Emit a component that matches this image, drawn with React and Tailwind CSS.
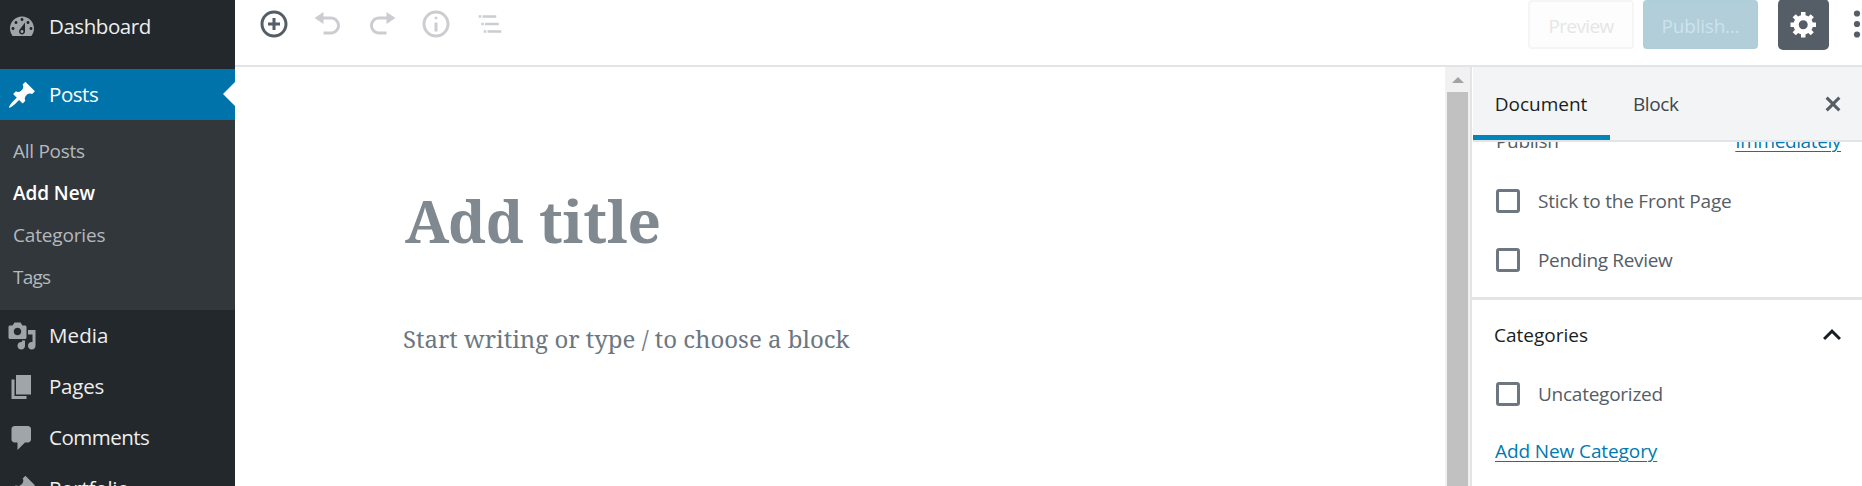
import React from 'react';

const paths = {
  dashboard: 'M3.76 16h12.48c1.1-1.37 1.76-3.11 1.76-5 0-4.42-3.58-8-8-8s-8 3.58-8 8c0 1.89.66 3.63 1.76 5zM10 4c.55 0 1 .45 1 1s-.45 1-1 1-1-.45-1-1 .45-1 1-1zM6 6c.55 0 1 .45 1 1s-.45 1-1 1-1-.45-1-1 .45-1 1-1zm8 0c.55 0 1 .45 1 1s-.45 1-1 1-1-.45-1-1 .45-1 1-1zm-5.37 5.55L12 7v6c0 1.1-.9 2-2 2s-2-.9-2-2c0-.57.24-1.08.63-1.45zM4 10c.55 0 1 .45 1 1s-.45 1-1 1-1-.45-1-1 .45-1 1-1zm12 0c.55 0 1 .45 1 1s-.45 1-1 1-1-.45-1-1 .45-1 1-1zm-5 3c0-.55-.45-1-1-1s-1 .45-1 1 .45 1 1 1 1-.45 1-1z',
  pin: 'M10.44 3.02l1.82-1.82 6.36 6.35-1.83 1.82c-1.05-.68-2.48-.57-3.41.36l-.75.75c-.92.93-1.04 2.35-.35 3.41l-1.83 1.82-2.41-2.41-2.8 2.79c-.42.42-3.38 2.71-3.8 2.29s1.86-3.39 2.28-3.81l2.79-2.79L4.1 9.36l1.83-1.82c1.05.69 2.48.57 3.4-.36l.75-.75c.93-.92 1.05-2.35.36-3.41z',
  media: 'M13 11V4c0-.55-.45-1-1-1h-1.67L9 1H5L3.67 3H2c-.55 0-1 .45-1 1v7c0 .55.45 1 1 1h10c.55 0 1-.45 1-1zM7 4.5c1.38 0 2.5 1.12 2.5 2.5S8.38 9.5 7 9.5 4.5 8.38 4.5 7 5.62 4.5 7 4.5zM14 6h5v10.5c0 1.38-1.12 2.5-2.5 2.5S14 17.88 14 16.5s1.12-2.5 2.5-2.5c.17 0 .34.02.5.05V9h-3V6zm-4 8.05V13h2v3.5c0 1.38-1.12 2.5-2.5 2.5S7 17.88 7 16.5 8.12 14 9.5 14c.17 0 .34.02.5.05z',
  page: 'M6 15V2h10v13H6zm-1 1h8v2H3V5h2v11z',
  comment: 'M5 2h9c1.1 0 2 .9 2 2v7c0 1.1-.9 2-2 2h-2l-5 5v-5H5c-1.1 0-2-.9-2-2V4c0-1.1.9-2 2-2z',
  insert: 'M10 1c-5 0-9 4-9 9s4 9 9 9 9-4 9-9-4-9-9-9zm0 16c-3.9 0-7-3.1-7-7s3.1-7 7-7 7 3.1 7 7-3.1 7-7 7zm1-11H9v3H6v2h3v3h2v-3h3V9h-3V6z',
  undo: 'M12 5H7V2L1 6l6 4V7h5c2.2 0 4 1.8 4 4s-1.8 4-4 4H7v2h5c3.3 0 6-2.7 6-6s-2.7-6-6-6z',
  redo: 'M8 5h5V2l6 4-6 4V7H8c-2.2 0-4 1.8-4 4s1.8 4 4 4h5v2H8c-3.3 0-6-2.7-6-6s2.7-6 6-6z',
  info: 'M9 15h2V9H9v6zm1-10c-.5 0-1 .5-1 1s.5 1 1 1 1-.5 1-1-.5-1-1-1zm0-4c-5 0-9 4-9 9s4 9 9 9 9-4 9-9-4-9-9-9zm0 16c-3.9 0-7-3.1-7-7s3.1-7 7-7 7 3.1 7 7-3.1 7-7 7z',
  gear: 'M18 12h-2.18c-.17.7-.44 1.35-.81 1.93l1.54 1.54-2.1 2.1-1.54-1.54c-.58.36-1.23.63-1.91.79V19H8v-2.18c-.68-.16-1.33-.43-1.91-.79l-1.54 1.54-2.12-2.12 1.54-1.54c-.36-.58-.63-1.23-.79-1.91H1V9.03h2.17c.16-.7.44-1.35.8-1.94L2.43 5.55l2.1-2.1 1.54 1.54c.58-.37 1.24-.64 1.93-.81V2h3v2.18c.68.16 1.33.43 1.91.79l1.54-1.54 2.12 2.12-1.54 1.54c.36.59.64 1.24.8 1.94H18V12zm-8.5 1.5c1.66 0 3-1.34 3-3s-1.34-3-3-3-3 1.34-3 3 1.34 3 3 3z',
  close: 'M14.95 6.46L11.41 10l3.54 3.54-1.41 1.41L10 11.42l-3.53 3.53-1.42-1.42L8.58 10 5.05 6.47l1.42-1.42L10 8.58l3.54-3.53z',
  list: 'M5 5H3v2h2V5zm3 8h11v-2H8v2zm9-8H6v2h11V5zM7 11H5v2h2v-2zm0 8h2v-2H7v2zm3-2v2h11v-2H10z',
  up: 'M12 8l-6 6 1.41 1.41L12 10.83l4.59 4.58L18 14z',
};

function Icon({ name, box = 20, className = 'size-[30px]' }) {
  return (
    <svg viewBox={`0 0 ${box} ${box}`} fill="currentColor" className={`shrink-0 ${className}`}>
      <path d={paths[name]} />
    </svg>
  );
}

function MenuItem({ icon, label, tracking, active }) {
  return (
    <li
      className={`flex h-[51px] shrink-0 items-center gap-[12.5px] pl-[6.5px] text-[20.5px] ${tracking} ${
        active ? 'relative bg-[#0073aa] text-white' : 'text-[#eee]'
      }`}
    >
      <Icon name={icon} className={active ? 'size-[30px] text-white' : 'size-[30px] text-[#a0a5aa]'} />
      <span>{label}</span>
      {active && (
        <svg viewBox="0 0 12 24" className="absolute top-[13px] right-0 h-6 w-3 fill-white">
          <path d="M12 0v24L0 12z" />
        </svg>
      )}
    </li>
  );
}

function AdminMenu() {
  return (
    <nav className="w-[235px] shrink-0 overflow-hidden bg-[#23282d] pt-px">
      <ul className="flex flex-col">
        <MenuItem icon="dashboard" label="Dashboard" tracking="tracking-[-0.45px]" />
        <li className="h-[17px]" />
        <MenuItem icon="pin" label="Posts" tracking="tracking-[-0.44px]" active />
        <li className="bg-[#32373c] pt-[10px] pb-[12px] pl-[13px] text-[19px] leading-[42px] text-[#b4b9be]">
          <ul>
            <li className="tracking-[-0.28px]">All Posts</li>
            <li className="font-semibold tracking-[-0.08px] text-white">Add New</li>
            <li className="tracking-[-0.16px]">Categories</li>
            <li className="tracking-[-0.8px]">Tags</li>
          </ul>
        </li>
        <MenuItem icon="media" label="Media" tracking="tracking-[0.1px]" />
        <MenuItem icon="page" label="Pages" tracking="tracking-[-0.22px]" />
        <MenuItem icon="comment" label="Comments" tracking="tracking-[-0.51px]" />
        <MenuItem icon="pin" label="Portfolio" tracking="tracking-[-0.2px]" />
      </ul>
    </nav>
  );
}

function Toolbar() {
  return (
    <header className="h-[67px] shrink-0 border-b-2 border-[#e2e4e7] bg-white">
      <div className="flex h-[49px] items-center">
        <div className="flex gap-6 pb-px pl-6 text-[#cbcdd0]">
          <Icon name="insert" className="size-[30px] text-[#555d66]" />
          <Icon name="undo" />
          <Icon name="redo" />
          <Icon name="info" />
          <Icon name="list" box={24} />
        </div>
        <div className="ml-auto flex items-center text-[19px]">
          <button className="flex h-[49px] w-[106px] items-center justify-center rounded-[4px] border-2 border-[#f5f5f5] bg-[#fdfdfd] pt-[3px] tracking-[-0.64px] text-[#e5e6e7]">
            Preview
          </button>
          <button className="ml-[9px] flex h-[49px] w-[115px] items-center justify-center rounded-[4px] border-2 border-[#adcfda] bg-[#b2ced9] pt-[3px] tracking-[-0.22px] text-[#cbe4ed]">
            Publish...
          </button>
          <button className="ml-5 flex h-[51px] w-[51px] items-center justify-center rounded-[5px] bg-[#555d66] pb-px text-white">
            <Icon name="gear" />
          </button>
          <svg viewBox="0 0 8 30" className="mb-px ml-6 h-[30px] w-2 text-[#555d66]" fill="currentColor">
            <circle cx="4" cy="4.5" r="3.1" />
            <circle cx="4" cy="15" r="3.1" />
            <circle cx="4" cy="25.5" r="3.1" />
          </svg>
          <span className="w-px" />
        </div>
      </div>
    </header>
  );
}

function Canvas() {
  return (
    <main className="flex min-w-0 flex-1 bg-white">
      <div className="flex-1 pt-[113px] pl-[168px] font-['Noto_Serif',serif]">
        <h1 className="pl-[2px] text-[58.5px] leading-[80px] font-bold text-[#808890]">Add title</h1>
        <p className="mt-[62px] text-[24px] leading-[34px] text-[#6c7781]">Start writing or type / to choose a block</p>
      </div>
      <div className="flex w-[25px] flex-col items-center bg-[#f1f1f1]">
        <svg viewBox="0 0 12 6" className="mt-2.5 mb-[9px] h-1.5 w-3 fill-[#a3a3a3]">
          <path d="M6 0l6 6H0z" />
        </svg>
        <div className="w-[21px] flex-1 bg-[#c1c1c1]" />
      </div>
    </main>
  );
}

function CheckRow({ label, tracking }) {
  return (
    <label className={`flex h-[26px] items-center gap-[18px] ${tracking}`}>
      <span className="size-6 shrink-0 rounded-[3px] border-[3px] border-[#6c7781]" />
      <span className="leading-[26px]">{label}</span>
    </label>
  );
}

function Settings() {
  return (
    <aside className="flex w-[392px] shrink-0 flex-col overflow-hidden border-l-2 border-[#e2e4e7] bg-white text-[19px] text-[#555d66]">
      <div className="ml-px flex h-[75px] shrink-0 items-stretch border-b-2 border-[#e2e4e7] bg-[#f3f4f5]">
        <div className="flex w-[137px] items-center justify-center border-b-5 border-[#0085ba] pt-[7px] pr-px font-medium text-[#191e23]">
          Document
        </div>
        <div className="flex items-center pt-0.5 pl-[23px] tracking-[-0.4px] text-[#40464d]">Block</div>
        <div className="ml-auto flex items-center pr-[14px] text-[#555d66]">
          <Icon name="close" />
        </div>
      </div>
      <div className="flex-1 overflow-hidden">
        <section className="flow-root h-[158px] border-b-[3px] border-[#e2e4e7] pr-[21px] pl-6">
          <div className="-mt-[14px] flex justify-between leading-[26px]">
            <span className="tracking-[-0.35px]">Publish</span>
            <a className="tracking-[-0.38px] text-[#0079b0] underline decoration-1 underline-offset-[3px]">Immediately</a>
          </div>
          <div className="mt-[34px] flex flex-col gap-[33px]">
            <CheckRow label="Stick to the Front Page" tracking="tracking-[-0.22px]" />
            <CheckRow label="Pending Review" tracking="tracking-[-0.34px]" />
          </div>
        </section>
        <section className="pr-[12.5px] pl-6">
          <div className="-ml-[2px] flex h-[70px] items-center justify-between font-medium text-[#191e23]">
            <span>Categories</span>
            <Icon name="up" box={24} className="size-9" />
          </div>
          <div className="mt-[11px]">
            <CheckRow label="Uncategorized" tracking="tracking-[-0.25px]" />
          </div>
          <a className="-ml-px mt-[31px] block leading-[26px] tracking-[-0.1px] text-[#0079b0] underline decoration-1 underline-offset-[3px]">
            Add New Category
          </a>
        </section>
      </div>
    </aside>
  );
}

export default function App() {
  return (
    <div className="flex h-[486px] w-full overflow-hidden bg-white font-['Open_Sans',sans-serif]">
      <AdminMenu />
      <div className="flex min-w-0 flex-1 flex-col">
        <Toolbar />
        <div className="flex min-h-0 flex-1">
          <Canvas />
          <Settings />
        </div>
      </div>
    </div>
  );
}
